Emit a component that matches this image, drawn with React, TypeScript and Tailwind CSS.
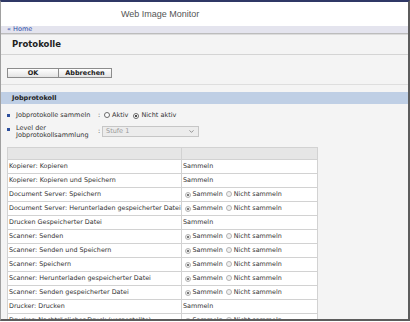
import { ChevronDown } from "lucide-react";

// Zeilen der Jobprotokoll-Tabelle: [Funktion, mit Auswahl?]
const rows: [string, boolean][] = [
  ["Kopierer: Kopieren", false],
  ["Kopierer: Kopieren und Speichern", false],
  ["Document Server: Speichern", true],
  ["Document Server: Herunterladen gespeicherter Datei", true],
  ["Drucken Gespeicherter Datei", false],
  ["Scanner: Senden", true],
  ["Scanner: Senden und Speichern", true],
  ["Scanner: Speichern", true],
  ["Scanner: Herunterladen gespeicherter Datei", true],
  ["Scanner: Senden gespeicherter Datei", true],
  ["Drucker: Drucken", false],
  ["Drucker: Nachträglicher Druck (vorgestellte)", true],
];

function Radio({ on, light }: { on?: boolean; light?: boolean }) {
  return (
    <span
      className={
        light
          ? "inline-flex h-[6px] w-[6px] shrink-0 items-center justify-center rounded-full border border-[#b4b4b4] bg-[#f0f0f0]"
          : "inline-flex h-[6px] w-[6px] shrink-0 items-center justify-center rounded-full border border-[#6a6a6a] bg-white"
      }
    >
      {on && <span className={light ? "h-[2px] w-[2px] rounded-full bg-[#555]" : "h-[2px] w-[2px] rounded-full bg-[#111]"} />}
    </span>
  );
}

function Bullet() {
  return <span className="block h-[3px] w-[3px] shrink-0 bg-[#2d4f9c]" />;
}

export default function App() {
  return (
    <div className="h-[321px] w-[410px] overflow-hidden border-t-2 border-r-2 border-b-2 border-l border-t-[#2f3866] border-r-[#5c5c5c] border-b-[#5c5c5c] border-l-[#a0a0a0] font-['DejaVu_Sans',sans-serif] text-[6.5px] leading-none text-[#333]">
      <div className="flex h-[24px] items-center bg-white pl-[120px] font-['Liberation_Sans',Arial,sans-serif] text-[9px] text-[#555]">
        Web Image Monitor
      </div>
      <div className="flex h-[7px] items-center bg-[#e4e4ee] pl-[6px] text-[#2a4caa]">« Home</div>
      <div className="h-px bg-[#bcbcbc]" />
      <div className="h-px bg-[#dcdcdc]" />

      <div className="h-full bg-[#f4f4f4]">
        <div className="flex h-[19px] items-center pl-[11px] text-[8.5px] font-bold text-[#222]">Protokolle</div>
        <div className="h-px bg-[#d4d4d4]" />

        <div className="flex h-[29px] pl-[6px] pt-[13px]">
          <button className="h-[10px] w-[52px] border border-[#8c8c8c] bg-gradient-to-b from-white to-[#e4e4e4] text-[6.5px] font-bold leading-none text-[#222]">
            OK
          </button>
          <button className="h-[10px] w-[53px] border border-l-0 border-[#8c8c8c] bg-gradient-to-b from-white to-[#e4e4e4] text-[6.5px] font-bold leading-none text-[#222]">
            Abbrechen
          </button>
        </div>
        <div className="h-px bg-[#dedede]" />

        <div className="mt-[7px] flex h-[12px] items-center bg-[#bfcfe5] pl-[11px] font-bold text-[#222]">Jobprotokoll</div>

        <div className="mt-[7px] flex h-[8px] items-center pl-[6px] text-[#333]">
          <Bullet />
          <span className="ml-[6px] w-[82px] text-[#333]">Jobprotokolle sammeln</span>
          <span className="w-[6px]">:</span>
          <Radio />
          <span className="ml-[2px]">Aktiv</span>
          <span className="ml-[5px]">
            <Radio on />
          </span>
          <span className="ml-[2px]">Nicht aktiv</span>
        </div>

        <div className="mt-[6px] flex h-[13px] items-center pl-[6px] text-[#333]">
          <span className="mb-[4px]">
            <Bullet />
          </span>
          <span className="ml-[6px] w-[82px] leading-[6.5px] text-[#333]">
            Level der
            <br />
            Jobprotokollsammlung
          </span>
          <span className="w-[4px]">:</span>
          <div className="flex h-[11px] w-[97px] items-center justify-between border border-[#c6c6c6] bg-[#ececec] pl-[3px] pr-[3px] text-[#9a9a9a]">
            <span>Stufe 1</span>
            <ChevronDown className="h-[7px] w-[7px] text-[#555]" strokeWidth={2} />
          </div>
        </div>

        <table className="mt-[9px] ml-[6px] w-[311px] border-separate border-spacing-[1px] bg-[#d2d2d2] text-[6.4px]">
          <thead>
            <tr>
              <th className="h-[11px] w-[173px] bg-[#e6e6e6]" />
              <th className="h-[11px] bg-[#e6e6e6]" />
            </tr>
          </thead>
          <tbody>
            {rows.map(([label, pick]) => (
              <tr key={label}>
                <td className="h-[13px] max-w-[173px] overflow-hidden whitespace-nowrap bg-white pl-[1px] text-left">{label}</td>
                <td className="h-[13px] bg-white pl-[1px]">
                  {pick ? (
                    <span className="flex items-center">
                      <span className="ml-[2px]">
                        <Radio on light />
                      </span>
                      <span className="ml-[1.5px]">Sammeln</span>
                      <span className="ml-[3px]">
                        <Radio light />
                      </span>
                      <span className="ml-[2px]">Nicht sammeln</span>
                    </span>
                  ) : (
                    "Sammeln"
                  )}
                </td>
              </tr>
            ))}
          </tbody>
        </table>
      </div>
    </div>
  );
}
